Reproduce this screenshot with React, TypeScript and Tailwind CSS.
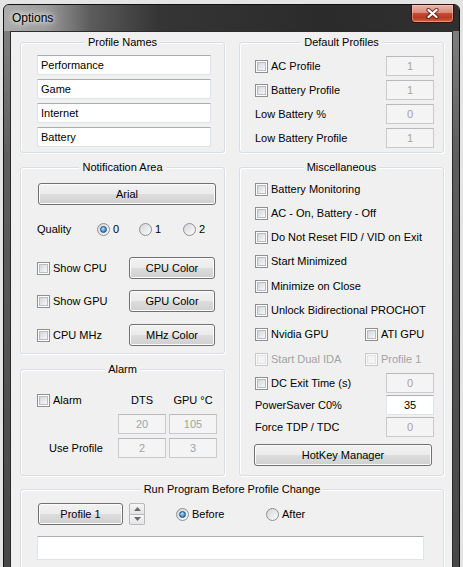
import type { ReactNode } from 'react'

function GroupBox({ title, className, children }: { title: string; className: string; children?: ReactNode }) {
  return (
    <div className={`relative rounded-[3px] border border-[#d5dfe5] shadow-[inset_1px_1px_0_#ffffff,1px_1px_0_#ffffff] ${className}`}>
      <div className="absolute inset-x-0 top-[-7px] flex justify-center">
        <span className="whitespace-nowrap bg-[#f0f0f0] px-[3px] leading-[13px]">{title}</span>
      </div>
      {children}
    </div>
  )
}

function CheckBox({ label, disabled }: { label: string; disabled?: boolean }) {
  return (
    <label className={`flex items-center gap-[3px] whitespace-nowrap ${disabled ? 'text-[#a3a3a3]' : ''}`}>
      <span
        className={`flex h-[13px] w-[13px] shrink-0 border p-[1px] ${
          disabled ? 'border-[#c9c9c9] bg-[#fafafa]' : 'border-[#8e8f8f] bg-white'
        }`}
      >
        <span
          className={`h-full w-full border ${
            disabled ? 'border-[#e3e3e3] bg-[#f3f3f3]' : 'border-[#b9bdc2] bg-linear-to-br from-[#d3d6da] to-[#f8f8f8]'
          }`}
        />
      </span>
      {label}
    </label>
  )
}

function Radio({ label, checked }: { label: string; checked?: boolean }) {
  return (
    <label className="flex items-center gap-[3px] whitespace-nowrap">
      <span className="flex h-[13px] w-[13px] shrink-0 items-center justify-center rounded-full border border-[#8e8f8f] bg-linear-to-br from-[#d3d6da] to-[#fbfbfb]">
        {checked && (
          <span className="h-[7px] w-[7px] rounded-full border border-[#1f4f7c] bg-[radial-gradient(circle_at_40%_35%,#c4e6ff_0%,#5ba4dd_45%,#245e95_100%)]" />
        )}
      </span>
      {label}
    </label>
  )
}

function Button({ children, className }: { children: ReactNode; className: string }) {
  return (
    <button
      className={`flex h-[22px] items-center justify-center rounded-[3px] border border-[#707070] bg-[linear-gradient(180deg,#f2f2f2_0%,#ebebeb_50%,#dddddd_51%,#cfcfcf_100%)] shadow-[inset_0_0_0_1px_#fcfcfc] ${className}`}
    >
      {children}
    </button>
  )
}

function Edit({ value, disabled, center, className = '' }: { value?: string; disabled?: boolean; center?: boolean; className?: string }) {
  return (
    <div
      className={`flex h-[20px] items-center border px-[3px] ${center ? 'justify-center' : ''} ${
        disabled ? 'border-[#c8cacd] border-t-[#b7b9bc] bg-[#f4f4f4] text-[#a3a3a3]' : 'border-[#dfe3ea] border-t-[#abadb3] bg-white'
      } ${className}`}
    >
      {value}
    </div>
  )
}

function Spinner() {
  return (
    <div className="ml-[6px] flex h-[22px] w-[16px] flex-col">
      <div className="flex flex-1 items-center justify-center rounded-t-[2px] border border-[#b5b8bc] bg-linear-to-b from-[#f6f6f6] to-[#e4e4e4]">
        <svg width="7" height="4" viewBox="0 0 7 4">
          <path d="M0 4 L3.5 0 L7 4 Z" fill="#6a6a6a" />
        </svg>
      </div>
      <div className="flex flex-1 items-center justify-center rounded-b-[2px] border border-t-0 border-[#b5b8bc] bg-linear-to-b from-[#f6f6f6] to-[#e4e4e4]">
        <svg width="7" height="4" viewBox="0 0 7 4">
          <path d="M0 0 L3.5 4 L7 0 Z" fill="#6a6a6a" />
        </svg>
      </div>
    </div>
  )
}

function CloseButton() {
  return (
    <div className="absolute right-[5px] top-[-1px] flex h-[19px] w-[43px] items-center justify-center rounded-b-[4px] border border-[#3b1008] bg-[linear-gradient(180deg,#e9b6aa_0%,#d98b7c_45%,#c44b31_50%,#b73a22_75%,#d5643f_100%)] shadow-[inset_0_0_0_1px_rgba(255,210,200,0.45)]">
      <svg width="13" height="11" viewBox="0 0 13 11">
        <path d="M2.5 2 L10.5 9 M10.5 2 L2.5 9" stroke="#4a1208" strokeOpacity="0.75" strokeWidth="4.2" strokeLinecap="round" />
        <path d="M2.5 2 L10.5 9 M10.5 2 L2.5 9" stroke="#ffffff" strokeWidth="2.3" strokeLinecap="round" />
      </svg>
    </div>
  )
}

const PROFILE_NAMES = ['Performance', 'Game', 'Internet', 'Battery']

const MISC_CHECKS = [
  'Battery Monitoring',
  'AC - On, Battery - Off',
  'Do Not Reset FID / VID on Exit',
  'Start Minimized',
  'Minimize on Close',
  'Unlock Bidirectional PROCHOT',
]

export default function App() {
  return (
    <div className="h-[567px] w-[463px] overflow-hidden bg-[#e4e4e4] pl-[3px] pt-[4px] font-['Liberation_Sans',Arial,sans-serif] text-[11px] leading-[13px] text-black">
      <div className="flex h-[600px] w-[457px] flex-col rounded-t-[6px] border border-[#121212] bg-[linear-gradient(180deg,#858585_0%,#5e5e5e_25%,#454545_100%)]">
        {/* title bar */}
        <div className="relative h-[26px] shrink-0 rounded-t-[5px] bg-[linear-gradient(90deg,#ababab_0%,#9c9c9c_9%,#5c5c5c_19%,#353535_34%,#2b2b2b_70%,#303030_100%)] pl-[8px] pt-[6px]">
          <span className="text-[12px] leading-[14px] [text-shadow:0_0_5px_#ffffff,0_0_9px_#ffffff]">Options</span>
          <CloseButton />
        </div>

        {/* client area */}
        <div className="mx-[6px] flex-1 border border-[#2b2b2b] bg-[#f0f0f0] pl-[9px] pr-[8px] pt-[10px]">
          <div className="grid grid-cols-[205px_205px] gap-x-[14px]">
            {/* left column */}
            <div className="flex flex-col gap-[14px]">
              <GroupBox title="Profile Names" className="h-[111px] pl-[16px] pt-[12px]">
                <div className="flex w-[174px] flex-col gap-[4px]">
                  {PROFILE_NAMES.map((n) => (
                    <Edit key={n} value={n} />
                  ))}
                </div>
              </GroupBox>

              <GroupBox title="Notification Area" className="h-[187px] pl-[16px] pt-[15px]">
                <Button className="ml-[1px] w-[178px]">Arial</Button>
                <div className="mt-[13px] flex h-[22px] items-center">
                  <span className="w-[60px]">Quality</span>
                  <div className="w-[42px]">
                    <Radio label="0" checked />
                  </div>
                  <div className="w-[44px]">
                    <Radio label="1" />
                  </div>
                  <Radio label="2" />
                </div>
                <div className="mt-[17px] flex items-center">
                  <div className="w-[92px]">
                    <CheckBox label="Show CPU" />
                  </div>
                  <Button className="w-[86px]">CPU Color</Button>
                </div>
                <div className="mt-[11px] flex items-center">
                  <div className="w-[92px]">
                    <CheckBox label="Show GPU" />
                  </div>
                  <Button className="w-[86px]">GPU Color</Button>
                </div>
                <div className="mt-[12px] flex items-center">
                  <div className="w-[92px]">
                    <CheckBox label="CPU MHz" />
                  </div>
                  <Button className="w-[86px]">MHz Color</Button>
                </div>
              </GroupBox>

              <GroupBox title="Alarm" className="mt-[1px] h-[107px] pl-[16px] pt-[20px]">
                <div className="grid grid-cols-[78px_48px_48px] auto-rows-[20px] gap-x-[3px] gap-y-[4px]">
                  <div className="flex items-center">
                    <CheckBox label="Alarm" />
                  </div>
                  <div className="flex items-center justify-center">DTS</div>
                  <div className="flex items-center justify-center">GPU °C</div>
                  <div />
                  <Edit value="20" disabled center />
                  <Edit value="105" disabled center />
                  <div className="flex items-center pl-[12px]">Use Profile</div>
                  <Edit value="2" disabled center />
                  <Edit value="3" disabled center />
                </div>
              </GroupBox>
            </div>

            {/* right column */}
            <div className="flex flex-col gap-[14px]">
              <GroupBox title="Default Profiles" className="h-[111px] pl-[15px] pr-[9px] pt-[13px]">
                <div className="flex flex-col gap-[4px]">
                  <div className="flex h-[20px] items-center justify-between">
                    <CheckBox label="AC Profile" />
                    <Edit value="1" disabled center className="w-[48px]" />
                  </div>
                  <div className="flex h-[20px] items-center justify-between">
                    <CheckBox label="Battery Profile" />
                    <Edit value="1" disabled center className="w-[48px]" />
                  </div>
                  <div className="flex h-[20px] items-center justify-between">
                    <span>Low Battery %</span>
                    <Edit value="0" disabled center className="w-[48px]" />
                  </div>
                  <div className="flex h-[20px] items-center justify-between">
                    <span>Low Battery Profile</span>
                    <Edit value="1" disabled center className="w-[48px]" />
                  </div>
                </div>
              </GroupBox>

              <GroupBox title="Miscellaneous" className="h-[309px] pl-[15px] pr-[9px] pt-[11px]">
                <div className="flex flex-col gap-[4.3px]">
                  {MISC_CHECKS.map((c) => (
                    <div key={c} className="flex h-[20px] items-center">
                      <CheckBox label={c} />
                    </div>
                  ))}
                  <div className="flex h-[20px] items-center">
                    <div className="w-[110px]">
                      <CheckBox label="Nvidia GPU" />
                    </div>
                    <CheckBox label="ATI GPU" />
                  </div>
                  <div className="flex h-[20px] items-center">
                    <div className="w-[110px]">
                      <CheckBox label="Start Dual IDA" disabled />
                    </div>
                    <CheckBox label="Profile 1" disabled />
                  </div>
                </div>
                <div className="mt-[4px] flex flex-col gap-[2px]">
                  <div className="flex h-[20px] items-center justify-between">
                    <CheckBox label="DC Exit Time (s)" />
                    <Edit value="0" disabled center className="w-[48px]" />
                  </div>
                  <div className="flex h-[20px] items-center justify-between">
                    <span>PowerSaver C0%</span>
                    <Edit value="35" center className="w-[48px]" />
                  </div>
                  <div className="flex h-[20px] items-center justify-between">
                    <span>Force TDP / TDC</span>
                    <Edit value="0" disabled center className="w-[48px]" />
                  </div>
                </div>
                <Button className="ml-[-1px] mt-[7px] w-[178px]">HotKey Manager</Button>
              </GroupBox>
            </div>
          </div>

          <GroupBox title="Run Program Before Profile Change" className="mt-[13px] h-[100px] w-[424px] pl-[17px] pt-[13px]">
            <div className="flex items-center">
              <Button className="w-[85px]">Profile 1</Button>
              <Spinner />
              <div className="ml-[31px] w-[90px]">
                <Radio label="Before" checked />
              </div>
              <Radio label="After" />
            </div>
            <div className="ml-[-1px] mt-[11px] h-[24px] w-[387px] border border-[#dfe3ea] border-t-[#abadb3] bg-white" />
          </GroupBox>
        </div>
      </div>
    </div>
  )
}
